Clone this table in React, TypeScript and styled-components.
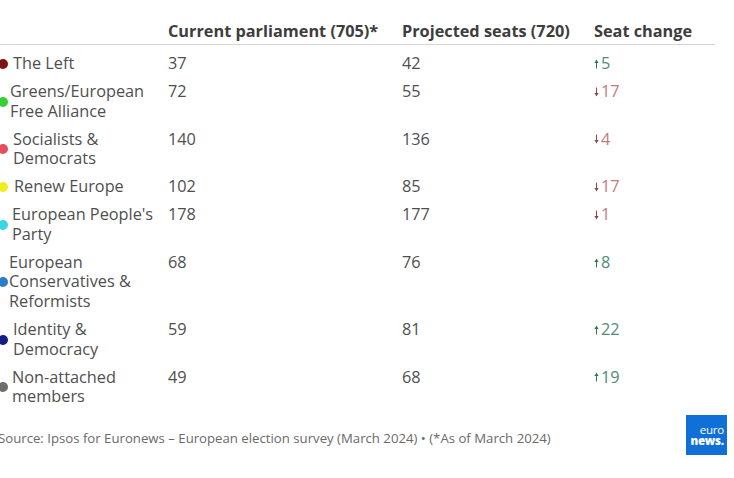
import React from 'react';
import styled, { createGlobalStyle } from 'styled-components';

interface IParty {
  name: string;
  color: string;
  current: number;
  projected: number;
  indent: number;
}

const parties: IParty[] = [
  { name: 'The Left', color: '#7d1414', current: 37, projected: 42, indent: 13 },
  { name: 'Greens/European Free Alliance', color: '#35d135', current: 72, projected: 55, indent: 10 },
  { name: 'Socialists & Democrats', color: '#e4505a', current: 140, projected: 136, indent: 13 },
  { name: 'Renew Europe', color: '#f2ee1e', current: 102, projected: 85, indent: 14 },
  { name: "European People's Party", color: '#3ad6e2', current: 178, projected: 177, indent: 12 },
  { name: 'European Conservatives & Reformists', color: '#2b7cc9', current: 68, projected: 76, indent: 9 },
  { name: 'Identity & Democracy', color: '#121d86', current: 59, projected: 81, indent: 13 },
  { name: 'Non-attached members', color: '#6e6e6e', current: 49, projected: 68, indent: 12 }
];

const GlobalStyle = createGlobalStyle`
  html, body {
    margin: 0;
    padding: 0;
    background: #fff;
  }
  body {
    font-family: 'Open Sans', 'Noto Sans', sans-serif;
    color: #555;
    overflow: hidden;
  }
`;

const Page = styled.div`
  width: 727px;
  padding-top: 21px;
`;

const Grid = styled.div`
  display: grid;
  grid-template-columns: 168px 234px 192px 121px;
  width: 715px;
`;

const HeadCell = styled.div`
  font-size: 16.3px;
  font-weight: 700;
  line-height: 20px;
  color: #3d3d3d;
  padding-bottom: 3px;
  border-bottom: 1px solid #d4d4d4;
  margin-bottom: 5px;
  white-space: nowrap;
`;

const NameCell = styled.div<{ $indent: number }>`
  display: flex;
  align-items: center;
  padding: 4px 0 4.6px;
  font-size: 16.3px;
  line-height: 19.5px;
  color: #4f4f4f;

  span {
    padding-left: ${(p) => p.$indent - 8}px;
    max-width: 150px;
  }
`;

const Dot = styled.i<{ $color: string }>`
  flex: none;
  width: 10px;
  height: 10px;
  margin-left: -2px;
  border-radius: 50%;
  background: ${(p) => p.$color};
`;

const NumCell = styled.div`
  padding: 4px 0 4.6px;
  font-size: 16.3px;
  line-height: 19.5px;
  color: #4f4f4f;
`;

const Change = styled.div<{ $up: boolean }>`
  display: flex;
  align-items: center;
  align-self: start;
  gap: 2px;
  padding: 4px 0 4.6px;
  font-size: 16.3px;
  line-height: 19.5px;
  color: ${(p) => (p.$up ? '#4f8c78' : '#c47a7e')};

  svg {
    color: ${(p) => (p.$up ? '#2d7a55' : '#8a4a4a')};
  }
`;

const Footer = styled.div`
  display: flex;
  justify-content: space-between;
  align-items: center;
  padding-top: 4px;
`;

const Source = styled.div`
  margin-left: -2px;
  margin-top: 6px;
  font-size: 13.2px;
  color: #6a6a6a;
`;

const Logo = styled.div`
  width: 41px;
  height: 40px;
  background: #1170d8;
  color: #fff;
  display: flex;
  flex-direction: column;
  justify-content: center;
  align-items: flex-end;
  padding-right: 3px;
  box-sizing: border-box;
  font-family: 'Open Sans', sans-serif;
  font-size: 11.5px;
  line-height: 11px;
  letter-spacing: -0.2px;

  span:last-child {
    font-weight: 800;
  }
`;

const Arrow = ({ up }: { up: boolean }) => (
  <svg width="5" height="10" viewBox="0 0 5 10">
    <g transform={up ? undefined : 'rotate(180 2.5 5)'}>
      <path d="M2.5 0.5 L4.6 4 L0.4 4 Z" fill="currentColor" />
      <rect x="2" y="3.5" width="1" height="6" fill="currentColor" />
    </g>
  </svg>
);

const App = () => {
  return (
    <Page>
      <GlobalStyle />
      <Grid>
        <HeadCell />
        <HeadCell>Current parliament (705)*</HeadCell>
        <HeadCell>Projected seats (720)</HeadCell>
        <HeadCell>Seat change</HeadCell>
        {parties.map((p) => {
          const diff = p.projected - p.current;
          const up = diff > 0;
          return (
            <React.Fragment key={p.name}>
              <NameCell $indent={p.indent}>
                <Dot $color={p.color} />
                <span>{p.name}</span>
              </NameCell>
              <NumCell>{p.current}</NumCell>
              <NumCell>{p.projected}</NumCell>
              <Change $up={up}>
                <Arrow up={up} />
                {Math.abs(diff)}
              </Change>
            </React.Fragment>
          );
        })}
      </Grid>
      <Footer>
        <Source>Source: Ipsos for Euronews – European election survey (March 2024) • (*As of March 2024)</Source>
        <Logo>
          <span>euro</span>
          <span>news.</span>
        </Logo>
      </Footer>
    </Page>
  );
};

export default App;
